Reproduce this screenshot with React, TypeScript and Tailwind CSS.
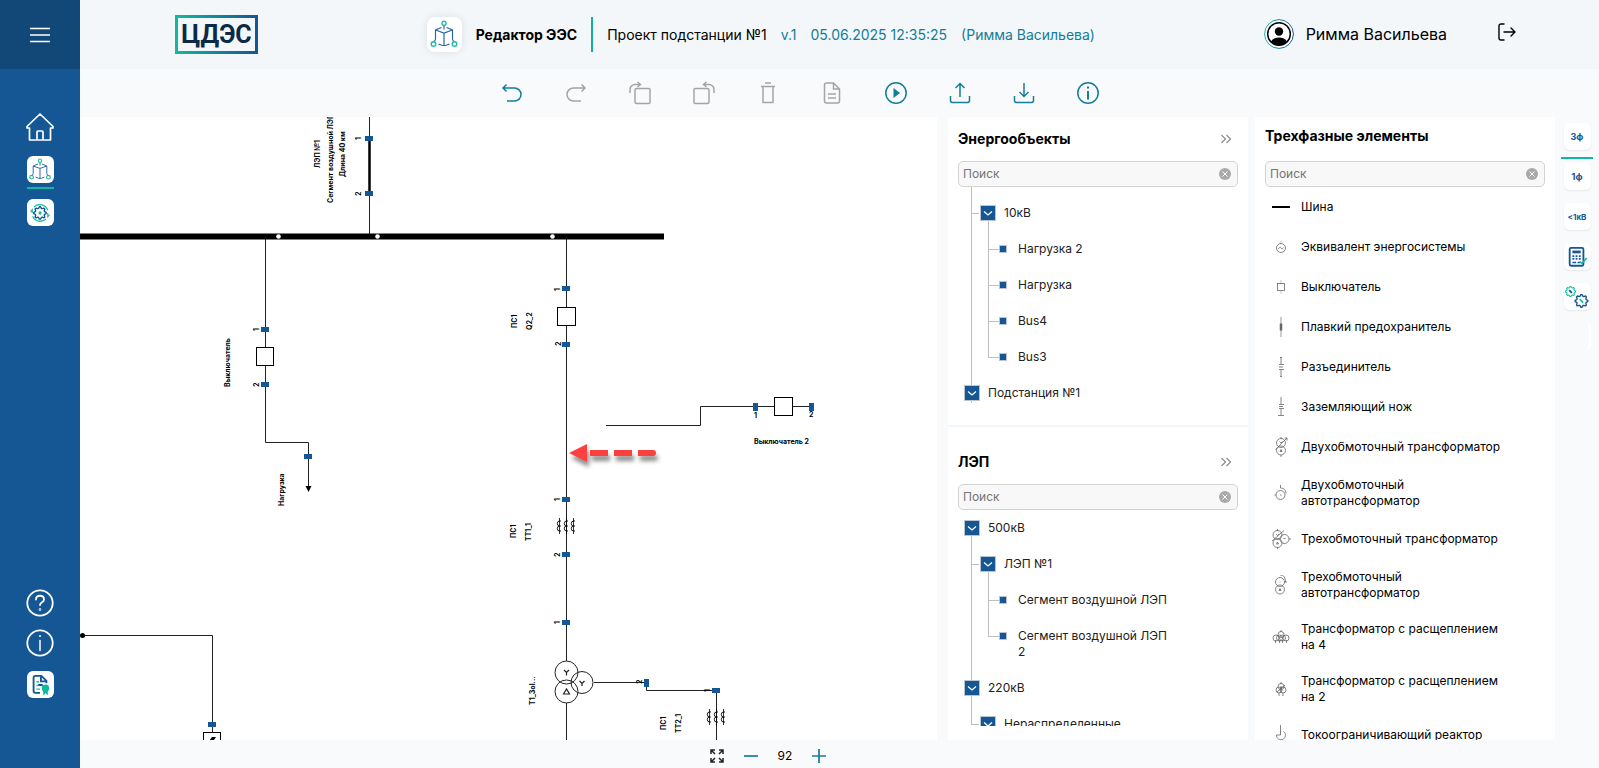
import React, { ReactNode } from "react";

type TreeNode = { level: 0 | 1 | 2; label: string; lines: ReactNode };

// Connector pieces, all relative to the row they are drawn in
const Line = ({ className }: { className: string }) => (
  <span className={`absolute bg-[#bfbfbf] ${className}`} />
);

const trunk = <Line className="left-[23px] inset-y-0 w-px" />;

const energyTree: TreeNode[] = [
  {
    level: 1,
    label: "10кВ",
    lines: (
      <>
        {trunk}
        <Line className="left-[23px] top-[18px] w-2 h-px" />
        <Line className="left-10 top-[18px] bottom-0 w-px" />
      </>
    ),
  },
  ...["Нагрузка 2", "Нагрузка", "Bus4", "Bus3"].map((label, i): TreeNode => ({
    level: 2,
    label,
    lines: (
      <>
        {trunk}
        <Line className={i === 3 ? "left-10 top-0 h-[18px] w-px" : "left-10 inset-y-0 w-px"} />
        <Line className="left-10 top-[18px] w-3 h-px" />
      </>
    ),
  })),
  { level: 0, label: "Подстанция №1", lines: <Line className="left-[23px] top-0 h-7 w-px" /> },
];

const lineTree: TreeNode[] = [
  { level: 0, label: "500кВ", lines: <Line className="left-[23px] top-[18px] bottom-0 w-px" /> },
  {
    level: 1,
    label: "ЛЭП №1",
    lines: (
      <>
        {trunk}
        <Line className="left-[23px] top-[18px] w-2 h-px" />
        <Line className="left-10 top-[18px] bottom-0 w-px" />
      </>
    ),
  },
  ...["Сегмент воздушной ЛЭП", "Сегмент воздушной ЛЭП 2"].map((label, i): TreeNode => ({
    level: 2,
    label,
    lines: (
      <>
        {trunk}
        <Line className={i === 1 ? "left-10 top-0 h-[18px] w-px" : "left-10 inset-y-0 w-px"} />
        <Line className="left-10 top-[18px] w-3 h-px" />
      </>
    ),
  })),
  { level: 0, label: "220кВ", lines: trunk },
  {
    level: 1,
    label: "Нераспределенные",
    lines: (
      <>
        <Line className="left-[23px] top-0 h-[18px] w-px" />
        <Line className="left-[23px] top-[18px] w-2 h-px" />
      </>
    ),
  },
];

const indent = ["pl-4", "pl-8", "pl-[51px]"];

const Tree = ({ nodes }: { nodes: TreeNode[] }) => (
  <ul>
    {nodes.map((node) => (
      <li key={node.label} className={`relative flex items-start py-2.5 pr-20 ${indent[node.level]}`}>
        {node.lines}
        {node.level < 2 ? (
          <button
            aria-label={`Свернуть ${node.label}`}
            className="relative mr-2 flex size-4 shrink-0 items-center justify-center border border-[#b9c4d0] bg-[#145794]"
          >
            <svg viewBox="0 0 10 10" className="size-2.5" fill="none" stroke="white" strokeWidth="1.3">
              <path d="M1 3.5l4 3.5 4-3.5" />
            </svg>
          </button>
        ) : (
          <span className="relative mt-1 mr-[11px] size-2 shrink-0 border border-[#b9c4d0] bg-[#145794]" />
        )}
        <span className="text-xs text-[#212121]">{node.label}</span>
      </li>
    ))}
  </ul>
);

const Search = ({ label }: { label: string }) => (
  <div className="mx-2.5 flex h-[26px] shrink-0 items-center rounded-[5px] border border-[#d3d3d3] bg-[#f8f8f8] pr-1.5 pl-1">
    <input
      type="text"
      placeholder="Поиск"
      aria-label={label}
      className="min-w-0 flex-1 bg-transparent text-xs text-black outline-none placeholder:text-[#757575]"
    />
    <button aria-label="Очистить">
      <svg viewBox="0 0 12 12" className="size-3">
        <circle cx="6" cy="6" r="6" fill="#a9a9a9" />
        <path d="M3.5 3.5l5 5m0-5l-5 5" stroke="white" />
      </svg>
    </button>
  </div>
);

const PanelHeader = ({ title }: { title: string }) => (
  <div className="flex h-11 shrink-0 items-center justify-between pr-4 pl-2.5">
    <h2 className="text-sm font-bold">{title}</h2>
    <button aria-label={`Скрыть: ${title}`}>
      <svg viewBox="0 0 12 10" className="h-2.5 w-3" fill="none" stroke="#8c8c8c" strokeWidth="1.2">
        <path d="M1.5 1l4 4-4 4M6.5 1l4 4-4 4" />
      </svg>
    </button>
  </div>
);

/* ---------- icons ---------- */

const CubeIcon = ({ className }: { className: string }) => (
  <svg viewBox="0 0 30 30" className={className} fill="none" strokeWidth="1.2">
    <g stroke="#2f66a5">
      <path d="M15 5.500v4M12.500 7.500L6.500 10v9.500M17.500 7.500l6 2.500v9.500M6.500 10L15 13l8.500-3M15 13v12M9.500 24l4 1.500h3l4-1.500M6.500 19.500l-1.500 2.500M23.500 19.500l1.500 2.500" />
    </g>
    <g stroke="#1cbfa2" strokeWidth="1.4">
      <circle cx="15" cy="3.300" r="2.100" />
      <circle cx="4.500" cy="24" r="2.300" />
      <circle cx="25.500" cy="24" r="2.300" />
    </g>
  </svg>
);

// Eight-toothed gear around (12, 12)
const gearPoints = Array.from({ length: 32 }, (_, i) => {
  const r = i % 4 < 2 ? 11 : 8.5;
  const a = ((i - 0.5) / 32) * Math.PI * 2;
  return `${(12 + r * Math.cos(a)).toFixed(2)},${(12 + r * Math.sin(a)).toFixed(2)}`;
}).join(" ");

const Gear = ({ stroke }: { stroke: string }) => (
  <polygon points={gearPoints} fill="none" stroke={stroke} strokeWidth="2.4" strokeLinejoin="round" />
);

const Home = () => (
  <svg viewBox="0 0 28 28" className="size-7" fill="none" stroke="white" strokeWidth="1.7" strokeLinejoin="round" strokeLinecap="round">
    <path d="M1 13.500L14 1l13 12.500v1.500h-2.500v12h-21V15H1zM11 27v-8a1 1 0 011-1h4a1 1 0 011 1V27" />
  </svg>
);

const CircleGlyph = ({ kind }: { kind: "help" | "info" }) => (
  <svg viewBox="0 0 28 28" className="size-7" fill="none" stroke="white" strokeWidth="1.8" strokeLinecap="round">
    <circle cx="14" cy="14" r="12.700" />
    {kind === "help" ? (
      <>
        <path d="M10 10.500c0-5 8-5 8 0 0 3-4 2.500-4 5.500" />
        <circle cx="14" cy="20.500" r=".4" />
      </>
    ) : (
      <path d="M14 11.500v10M13.500 7h1" strokeWidth="1.500" />
    )}
  </svg>
);

const tools: { label: string; disabled?: boolean; icon: ReactNode }[] = [
  { label: "Отменить", icon: <path d="M6.500 3.500L3 7l3.500 3.500M3 7H14.500a6.200 6.200 0 010 13H7" /> },
  { label: "Повторить", disabled: true, icon: <path d="M17.500 3.500L21 7l-3.500 3.500M21 7H9.500A6.200 6.200 0 009.500 20H17" /> },
  {
    label: "Повернуть вправо",
    disabled: true,
    icon: (
      <>
        <rect x="7" y="7.500" width="15" height="15" rx="1.500" />
        <path d="M2 12V8.500A5 5 0 017 3.500h5M9.500 1l3 2.500-3 2.500" />
      </>
    ),
  },
  {
    label: "Повернуть влево",
    disabled: true,
    icon: (
      <>
        <rect x="2" y="7.500" width="15" height="15" rx="1.500" />
        <path d="M22 12V8.500A5 5 0 0017 3.500h-5M14.500 1l-3 2.500 3 2.500" />
      </>
    ),
  },
  { label: "Удалить", disabled: true, icon: <path d="M5 5.500h14M9 2h6M7 5.500v16h10v-16" /> },
  {
    label: "Отчет",
    disabled: true,
    icon: <path d="M6 2h7.500L19.500 8v12a2 2 0 01-2 2H6.500a2 2 0 01-2-2V4a2 2 0 012-2zM13.500 2v6h6M8 13h8M8 17h8" />,
  },
  {
    label: "Запустить",
    icon: (
      <>
        <circle cx="12" cy="12" r="10.200" />
        <path d="M9.500 7l6.500 5-6.500 5z" fill="currentColor" stroke="none" />
      </>
    ),
  },
  { label: "Выгрузить", icon: <path d="M2.500 15v4.500a2 2 0 002 2h15a2 2 0 002-2V15M12 16V3M7.500 7L12 2.500 16.500 7" /> },
  { label: "Загрузить", icon: <path d="M2.500 15v4.500a2 2 0 002 2h15a2 2 0 002-2V15M12 2v13M7.500 11l4.500 4.500 4.500-4.500" /> },
  {
    label: "Информация",
    icon: (
      <>
        <circle cx="12" cy="12" r="10.200" />
        <path d="M12 10v8.500M12 5.500v2" strokeWidth="2" />
      </>
    ),
  },
];

const elements: { label: string; icon: ReactNode }[] = [
  { label: "Шина", icon: <path d="M1 10h18" stroke="black" strokeWidth="2" /> },
  {
    label: "Эквивалент энергосистемы",
    icon: (
      <>
        <path d="M10 4v3" stroke="#bbb" />
        <circle cx="10" cy="11" r="4.500" />
        <path d="M7.500 12c1-2.500 2-2 2.500-1s1.500 1.500 2.500-.5" />
      </>
    ),
  },
  {
    label: "Выключатель",
    icon: (
      <>
        <path d="M10 3v4M10 14v3" stroke="#bbb" />
        <rect x="6.500" y="6.500" width="7" height="7" />
      </>
    ),
  },
  {
    label: "Плавкий предохранитель",
    icon: (
      <>
        <path d="M10 0v20" stroke="#bbb" strokeWidth="1.500" />
        <path d="M10 6.500v7" strokeWidth="2.500" />
      </>
    ),
  },
  { label: "Разъединитель", icon: <path d="M10 0v7M10 13v6M8 7.500h5M8 10h4M8 12.500h5M9 .5h2M9 19.500h2" /> },
  { label: "Заземляющий нож", icon: <path d="M10 0v7M10 12v6M8 7.500h5M8 9.500h4M8 11.500h5M7 18.500h6" /> },
  {
    label: "Двухобмоточный трансформатор",
    icon: (
      <>
        <circle cx="10" cy="6" r="4.500" />
        <circle cx="10" cy="13.500" r="4.500" />
        <path d="M10 0v2M10 18v2M4.500 12.500L16 1M13.500 1H16v2.500M8.500 4.500L10 6l1.500-1.500M9 14.500l1-2 1 2z" />
      </>
    ),
  },
  {
    label: "Двухобмоточный автотрансформатор",
    icon: (
      <>
        <circle cx="9.500" cy="12" r="4.500" />
        <path d="M9.500 2v3c3.500 0 5.500 2 5.500 5.500M9 12h1.500M3.500 12H5" />
      </>
    ),
  },
  {
    label: "Трехобмоточный трансформатор",
    icon: (
      <>
        <circle cx="6.500" cy="6" r="4.500" />
        <circle cx="13.500" cy="10" r="4.500" />
        <circle cx="6.500" cy="14" r="4.500" />
        <path d="M6.500 0v2M6.500 18v2M18 10h2M1 12L13 1.500M5.500 15l1-2 1 2zM12.500 9.500h2M5 5l1.500 1.500L8 5" />
      </>
    ),
  },
  {
    label: "Трехобмоточный автотрансформатор",
    icon: (
      <>
        <circle cx="9" cy="7" r="4.500" />
        <circle cx="9" cy="14.500" r="4.500" />
        <path d="M9 0c4 0 5.500 3 5.500 7M13.500 7H16M8.500 7h1M8 15.500l1-2 1 2z" />
      </>
    ),
  },
  {
    label: "Трансформатор с расщеплением на 4",
    icon: (
      <>
        <circle cx="10" cy="7.500" r="3" />
        <circle cx="5" cy="11" r="3" />
        <circle cx="8.500" cy="11" r="3" />
        <circle cx="11.500" cy="11" r="3" />
        <circle cx="15" cy="11" r="3" />
        <path d="M10 3v2M4.500 13v3M8.500 13v3M11.500 13v3M15.500 13v3" />
      </>
    ),
  },
  {
    label: "Трансформатор с расщеплением на 2",
    icon: (
      <>
        <circle cx="10" cy="7.500" r="3" />
        <circle cx="8" cy="11" r="3" />
        <circle cx="12" cy="11" r="3" />
        <path d="M10 3v2M8 14v3M12 14v3M6 13l8-7M10 7v5" />
      </>
    ),
  },
  { label: "Токоограничивающий реактор", icon: <path d="M9.500 0v8M9.500 10H5.500a4.500 4.500 0 107-3.500M9.500 10V7" /> },
];

/* ---------- diagram ---------- */

const Port = ({ x, y, vertical }: { x: number; y: number; vertical?: boolean }) =>
  vertical ? (
    <rect x={x - 2} y={y - 4} width="5" height="8" fill="#145794" />
  ) : (
    <rect x={x - 4} y={y - 2} width="8" height="5" fill="#145794" />
  );

// Caption turned a quarter; (x, y) is the lower end of its baseline
const Caption = ({ x, y, children }: { x: number; y: number; children: string }) => (
  <text transform={`translate(${x} ${y}) rotate(-90)`}>{children}</text>
);

const Coils = ({ x, y }: { x: number; y: number }) => (
  <g fill="none" stroke="black">
    {[-7, 0, 7].map((dx) => (
      <g key={dx} transform={`translate(${x + dx + 0.5} ${y})`}>
        <path d="M0 -8V8" strokeWidth=".8" />
        <path d="M1.500 -5h-1.500a2 2.300 0 000 5h1.500M0 0a2 2.300 0 000 5h1.500" strokeWidth=".9" />
      </g>
    ))}
  </g>
);

const Diagram = () => (
  <svg className="absolute inset-0 size-full" role="img" aria-label="Схема подстанции">
    <defs>
      <filter id="arrowShadow" x="-20%" y="-50%" width="150%" height="250%">
        <feDropShadow dx="2" dy="5" stdDeviation="2" floodColor="#000" floodOpacity="0.45" />
      </filter>
    </defs>
    <g transform="translate(-80 -117)" fontFamily="Inter, sans-serif" fontSize="7" fontWeight="700">
      <g fill="none" stroke="#222">
        <path d="M369.500 117V236M265.500 236V442.500H308.500V488M566.500 236V661M566.500 703V740" />
        <path d="M606 425.500H700.500V406.500H811M82 635.500H212.500V732M594 682.500H646.500V690.500H716.500V740" />
      </g>
      <path d="M369.500 140V193" stroke="black" strokeWidth="2.500" />
      <path d="M80 236.500H664" stroke="black" strokeWidth="6" />
      <g fill="white">
        <circle cx="278.500" cy="236.500" r="2.300" />
        <circle cx="377.500" cy="236.500" r="2.300" />
        <circle cx="552.500" cy="236.500" r="2.300" />
      </g>
      <g fill="white" stroke="black">
        <rect x="256.500" y="347.500" width="17" height="18" />
        <rect x="557.500" y="307.500" width="18" height="18" />
        <rect x="774.500" y="397.500" width="18" height="18" />
        <rect x="203.500" y="732.500" width="17" height="18" />
      </g>
      <path d="M212 737h4l-2 3h2l-5 5v-4h-2z" />
      <path d="M305.500 486h6l-3 6z" />
      <circle cx="82.500" cy="635.500" r="2.500" />

      <Port x={369} y={138} />
      <Port x={369} y={193} />
      <Port x={265} y={329} />
      <Port x={265} y={384} />
      <Port x={308} y={456} />
      <Port x={566} y={288} />
      <Port x={566} y={344} />
      <Port x={566} y={499} />
      <Port x={566} y={554} />
      <Port x={566} y={622} />
      <Port x={212} y={724} />
      <Port x={716} y={690} />
      <Port x={755} y={407} vertical />
      <Port x={811} y={407} vertical />
      <Port x={646} y={683} vertical />

      <Coils x={566} y={526} />
      <Coils x={716} y={717} />

      <g fill="none" stroke="#222">
        <circle cx="566.500" cy="672.500" r="11.500" />
        <circle cx="582" cy="682.500" r="11" />
        <circle cx="566.500" cy="691.500" r="11.500" />
        <path d="M564 670l2.500 2.500L569 670M566.500 672.500v3M579.500 681l2.500 2.500 2.500-2.500M582 683.500v2.500M563.500 694l3-5 3 5z" strokeWidth="1.200" />
      </g>

      <Caption x={320} y={168}>ЛЭП №1</Caption>
      <Caption x={333} y={203}>Сегмент воздушной ЛЭП</Caption>
      <Caption x={345} y={177}>Длина 40 км</Caption>
      <Caption x={361} y={140}>1</Caption>
      <Caption x={361} y={196}>2</Caption>
      <Caption x={230} y={387}>Выключатель</Caption>
      <Caption x={259} y={331}>1</Caption>
      <Caption x={259} y={387}>2</Caption>
      <Caption x={284} y={506}>Нагрузка</Caption>
      <Caption x={517} y={328}>ПС1</Caption>
      <Caption x={532} y={330}>Q2_2</Caption>
      <Caption x={560} y={291}>1</Caption>
      <Caption x={561} y={346}>2</Caption>
      <Caption x={516} y={538}>ПС1</Caption>
      <Caption x={531} y={541}>ТТ1_1</Caption>
      <Caption x={560} y={501}>1</Caption>
      <Caption x={560} y={557}>2</Caption>
      <Caption x={560} y={624}>1</Caption>
      <Caption x={535} y={705}>T1_3ol...</Caption>
      <Caption x={642} y={684}>2</Caption>
      <Caption x={710} y={692}>1</Caption>
      <Caption x={666} y={730}>ПС1</Caption>
      <Caption x={681} y={733}>ТТ2_1</Caption>
      <text x="754" y="418">1</text>
      <text x="809" y="417">2</text>
      <text x="754" y="444">Выключатель 2</text>

      <g filter="url(#arrowShadow)" fill="#fb4141">
        <path d="M569 453l18-9v18zM590 450h18v6h-18zM614 450h18v6h-18zM638 450h15a3 3 0 010 6h-15z" />
      </g>
    </g>
  </svg>
);

/* ---------- page parts ---------- */

const tile = "flex size-[27px] items-center justify-center rounded-md bg-white";

const Sidebar = () => (
  <aside className="flex w-20 shrink-0 flex-col bg-[#145794]">
    <button aria-label="Меню" className="flex h-[69px] w-full items-center justify-center bg-[#124878]">
      <svg viewBox="0 0 20 16" className="h-4 w-5" stroke="white" strokeWidth="1.500">
        <path d="M0 1.500h20M0 8h20M0 14.500h20" />
      </svg>
    </button>
    <nav className="flex flex-1 flex-col items-center pt-11">
      <a href="#home" aria-label="Главная">
        <Home />
      </a>
      <a href="#editor" aria-label="Редактор" className={`mt-[15px] ${tile}`}>
        <CubeIcon className="size-6" />
      </a>
      <span className="mt-1 h-0.5 w-[27px] bg-[#0fb9a0]" />
      <a href="#calc" aria-label="Расчеты" className={`mt-2.5 ${tile}`}>
        <svg viewBox="0 0 24 24" className="size-[22px]" fill="none">
          <path d="M4 15.500a9 9 0 0014.500 3M20.500 9A9 9 0 005.500 5.500M3.500 12V8.500L1.500 10.500M20.500 12v4l2-2" stroke="#1cbfa2" strokeWidth="1.400" />
          <g transform="translate(4.500 4.500) scale(.62)">
            <Gear stroke="#145794" />
          </g>
          <circle cx="12" cy="12" r="1.800" fill="#1cbfa2" />
        </svg>
      </a>
      <a href="#help" aria-label="Помощь" className="mt-auto">
        <CircleGlyph kind="help" />
      </a>
      <a href="#about" aria-label="О программе" className="mt-3">
        <CircleGlyph kind="info" />
      </a>
      <a href="#license" aria-label="Лицензия" className={`mt-3.5 mb-[70px] ${tile}`}>
        <svg viewBox="0 0 24 24" className="size-[22px]" fill="none">
          <path d="M12 20.500H7a2 2 0 01-2-2V4a2 2 0 012-2h6.500l5.500 5.500V10M13 2v6h6M10 12h5" stroke="#145794" strokeWidth="2" />
          <path d="M8 8.500h3M8 12.500h2M8 16.500h4" stroke="#1cbfa2" strokeWidth="1.500" />
          <circle cx="18" cy="15.500" r="4" fill="#0fb9a0" />
          <path d="M15.500 18h5v5.500L18 21l-2.500 2.500z" fill="#0fb9a0" />
        </svg>
      </a>
    </nav>
  </aside>
);

const Header = () => (
  <header className="flex h-[69px] shrink-0 items-center bg-[#f3f7fa]">
    <a href="#home" aria-label="ЦДЭС" className="ml-[95px]">
      <svg viewBox="0 0 83 39" className="h-[39px] w-[83px]">
        <defs>
          <linearGradient id="brand">
            <stop offset="0" stopColor="#0fb9a0" />
            <stop offset="1" stopColor="#145794" />
          </linearGradient>
        </defs>
        <rect x="1.500" y="1.500" width="80" height="36" fill="none" stroke="url(#brand)" strokeWidth="3" />
        <text x="41.500" y="28" textAnchor="middle" fontFamily="Roboto, sans-serif" fontSize="25" fontWeight="700" fill="#0b2a48">
          ЦДЭС
        </text>
      </svg>
    </a>
    <div className="mx-auto flex items-center">
      <span className="flex size-[35px] items-center justify-center rounded-lg bg-white shadow-[0_0_8px_rgba(0,0,0,0.1)]">
        <CubeIcon className="size-[30px]" />
      </span>
      <h1 className="ml-3.5 text-sm font-bold">Редактор ЭЭС</h1>
      <span className="mx-3.5 h-[35px] w-0.5 bg-[#0fb09c]" />
      <div className="flex gap-3.5 text-sm text-[#147d98]">
        <span className="text-black">Проект подстанции №1</span>
        <span>v.1</span>
        <span>05.06.2025 12:35:25</span>
        <span>(Римма Васильева)</span>
      </div>
    </div>
    <div className="mr-[83px] mb-0.5 flex items-center">
      <svg viewBox="0 0 30 30" className="size-[30px]">
        <circle cx="15" cy="15" r="14.400" fill="white" stroke="url(#brand)" />
        <circle cx="15" cy="15" r="11.300" fill="white" stroke="black" strokeWidth="1.500" />
        <circle cx="15" cy="12.500" r="4.200" />
        <path d="M7 22.500c2.500-5.500 13.500-5.500 16 0-4 5-12 5-16 0z" />
      </svg>
      <span className="ml-3 text-base">Римма Васильева</span>
      <button aria-label="Выйти" className="mb-1 ml-[51px]">
        <svg viewBox="0 0 18 18" className="size-[18px]" fill="none" stroke="black" strokeWidth="1.400" strokeLinecap="round">
          <path d="M6 1H3a2 2 0 00-2 2v12a2 2 0 002 2h3M6 9h11M13 5l4 4-4 4" />
        </svg>
      </button>
    </div>
  </header>
);

const Toolbar = () => (
  <div className="flex h-12 shrink-0 items-center justify-center gap-10 pr-[79px]">
    {tools.map((tool) => (
      <button
        key={tool.label}
        aria-label={tool.label}
        disabled={tool.disabled}
        className="text-[#147d98] disabled:text-[#a3a5a8]"
      >
        <svg viewBox="0 0 24 24" className="size-6" fill="none" stroke="currentColor" strokeWidth="1.500">
          {tool.icon}
        </svg>
      </button>
    ))}
  </div>
);

const RightRail = () => {
  const button =
    "flex size-[27px] items-center justify-center rounded-md bg-white text-[9px] font-bold text-[#145794] shadow-[0_1px_2px_rgba(0,0,0,0.08)]";

  return (
    <div className="flex w-11 shrink-0 flex-col items-center gap-[13px] pt-1.5">
      <div className="relative">
        <button className={button}>3ф</button>
        <span className="absolute top-[34px] -left-[3px] h-0.5 w-8 bg-[#0fb9a0]" />
      </div>
      <button className={button}>1ф</button>
      <button className={button}>
        <span className="text-[8px]">&lt;1кВ</span>
      </button>
      <button className={button} aria-label="Калькулятор">
        <svg viewBox="0 0 24 24" className="size-[22px]" fill="none" stroke="#145794">
          <rect x="4" y="2" width="15" height="19.500" rx="1.500" strokeWidth="2" />
          <path d="M7 6.500h9" strokeWidth="3" />
          <path d="M7 11h2M10.500 11h2M14 11h2M7 14h2M10.500 14h2M14 14h2M7 18h4M12.500 18h3" strokeWidth="1.800" />
          <path d="M15 17l2.500 2 5-6" stroke="#0fb9a0" strokeWidth="1.800" />
        </svg>
      </button>
      <button className={button} aria-label="Настройки">
        <svg viewBox="0 0 24 24" className="size-6" fill="none">
          <g transform="translate(0 1) scale(.46)">
            <Gear stroke="#1cbfa2" />
            <path d="M9 9l6 6" stroke="#145794" strokeWidth="4" />
          </g>
          <g transform="translate(9.500 9) scale(.58)">
            <Gear stroke="#145794" />
            <path d="M9 9l6 6" stroke="#1cbfa2" strokeWidth="3" />
          </g>
        </svg>
      </button>
      <span className="size-[27px] rounded-md border-r-2 border-white" />
    </div>
  );
};

const ZoomBar = () => (
  <div className="flex h-7 shrink-0 items-center justify-center gap-5 pt-1 pr-[143px]">
    <button aria-label="На весь экран">
      <svg viewBox="0 0 14 14" className="size-3.5" fill="none" stroke="#222" strokeWidth="1.500">
        <path d="M1 5V1h4M1 1l4 4M9 1h4v4M13 1L9 5M1 9v4h4M1 13l4-4M13 9v4H9M13 13L9 9" />
      </svg>
    </button>
    <button aria-label="Уменьшить" className="text-[#147d98]">
      <svg viewBox="0 0 14 14" className="size-3.5" stroke="currentColor" strokeWidth="1.700">
        <path d="M0 7h14" />
      </svg>
    </button>
    <span className="text-xs">92</span>
    <button aria-label="Увеличить" className="text-[#147d98]">
      <svg viewBox="0 0 14 14" className="size-3.5" stroke="currentColor" strokeWidth="1.700">
        <path d="M0 7h14M7 0v14" />
      </svg>
    </button>
  </div>
);

const App = () => (
  <div className="flex h-screen overflow-hidden bg-[#f9fafc] font-[Inter,sans-serif] text-black">
    <Sidebar />
    <div className="flex min-w-0 flex-1 flex-col">
      <Header />
      <Toolbar />
      <div className="flex min-h-0 flex-1">
        <main className="relative min-w-0 flex-1 overflow-hidden bg-white">
          <Diagram />
        </main>

        <div className="ml-[11px] flex w-[300px] shrink-0 flex-col bg-white">
          <section className="flex flex-1 flex-col overflow-hidden pb-2">
            <PanelHeader title="Энергообъекты" />
            <Search label="Поиск энергообъектов" />
            <div className="flex flex-1 flex-col overflow-hidden">
              {/* trunk coming from the rows scrolled out of view */}
              <div className="relative h-2 shrink-0">{trunk}</div>
              <Tree nodes={energyTree} />
            </div>
          </section>
          <section className="flex flex-1 flex-col overflow-hidden border-t-2 border-[#f3f7fa] pt-[13px]">
            <PanelHeader title="ЛЭП" />
            <Search label="Поиск ЛЭП" />
            <div className="mb-3.5 flex-1 overflow-hidden">
              <Tree nodes={lineTree} />
            </div>
          </section>
        </div>

        <section className="ml-[7px] flex w-[300px] shrink-0 flex-col bg-white">
          <h2 className="flex h-11 shrink-0 items-center px-2.5 pb-1.5 text-sm font-bold">Трехфазные элементы</h2>
          <Search label="Поиск элементов" />
          <ul className="min-h-0 flex-1 overflow-hidden">
            {elements.map((el) => (
              <li key={el.label} className="flex min-h-10 items-center gap-2.5 py-2.5 pr-12 pl-4">
                <svg viewBox="0 0 20 20" className="size-5 shrink-0" fill="none" stroke="#666" strokeWidth=".8">
                  {el.icon}
                </svg>
                <span className="text-xs">{el.label}</span>
              </li>
            ))}
          </ul>
        </section>

        <RightRail />
      </div>
      <ZoomBar />
    </div>
  </div>
);

export default App;
